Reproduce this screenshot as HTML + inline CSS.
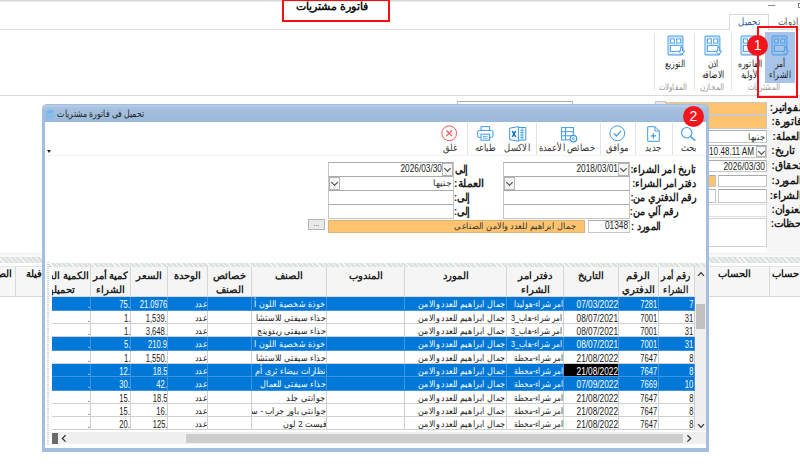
<!DOCTYPE html>
<html lang="ar">
<head>
<meta charset="utf-8">
<title>فاتورة مشتريات</title>
<style>
*{box-sizing:border-box;margin:0;padding:0}
html,body{width:800px;height:465px;overflow:hidden;background:#fff}
body{font-family:"Liberation Sans",sans-serif;font-size:10px;color:#1a1a1a;position:relative}
.abs,.abs *{position:absolute}
div{position:absolute}
span{position:static}
.t{white-space:nowrap;direction:rtl}
.b{font-weight:bold}
.fld{background:#fff;border:1px solid #c6c6c6;border-top-color:#a9abb1}
.or{background:#fdc36f;border:1px solid #c9c9c9}
.hatch{background:repeating-linear-gradient(45deg,#dce2de 0 2.8px,#f8f9f8 2.8px 3.7px)}
/* grid */
.hc{top:267px;height:30.2px;background:#f5f5f5;border-right:1px solid #d6d6d6;border-bottom:1px solid #d6d6d6;text-align:center;font-weight:bold;font-size:9.5px;line-height:14px;padding-top:2px;direction:rtl;white-space:nowrap;overflow:hidden;color:#222}
.row{left:52px;width:642.5px;background:#fff;border-bottom:1px solid #d0d0d0;overflow:hidden}
.row.sel{background:#0078d7;color:#fff;border-bottom-color:#3f93dc}
.c{top:0;height:100%;border-right:1px solid #d0d0d0;overflow:hidden;white-space:nowrap;direction:rtl;text-align:right;line-height:15.8px;font-size:9px}
.row.sel .c{border-right-color:#3f93dc}
.c.n{direction:ltr;text-align:right;font-size:10px;padding-right:0}
.c.n span{display:inline-block;transform:scaleX(.76);transform-origin:right center}
.c.n.d span{transform:scaleX(.83)}
.c.a.f span{transform:scaleX(.8)}
.c.a{padding-right:0}
.c.a span{display:inline-block;transform:scaleX(.88);transform-origin:right center}
.c.blk{background:#000;color:#fff}
.lbl{font-weight:bold;font-size:10.5px;white-space:nowrap;direction:rtl;text-align:right;line-height:14px;transform:scaleX(.87);transform-origin:right center}
.num{direction:ltr;white-space:nowrap;font-size:10px;line-height:12px;color:#222;transform:scaleX(.83);transform-origin:right center}
.tb{font-size:9.5px;white-space:nowrap;direction:rtl;text-align:center;color:#333;line-height:12px;transform:scaleX(.84)}
.sep{width:1px;background:#e3e3e3}
.rb{font-size:9.5px;text-align:center;direction:rtl;line-height:11.3px;color:#262626;white-space:nowrap;transform:scaleX(.76)}
.gl{font-size:8.5px;text-align:center;direction:rtl;color:#9a9a9a;white-space:nowrap;line-height:10px;transform:scaleX(.8)}
.circ{border-radius:50%;background:#f3151c;color:#fff;text-align:center;font-size:14px;line-height:21px;width:21px;height:21px}
.lbl.rl{transform:scaleX(.95)}
.dd{background:#f6f6f6;border:1px solid #b5b5b5}
.dd::after{content:"";position:absolute;left:2.2px;top:2.2px;width:4px;height:4px;border-right:1px solid #444;border-bottom:1px solid #444;transform:rotate(45deg)}
</style>
</head>
<body>

<!-- ===== top window edge ===== -->
<div style="left:0;top:0;width:800px;height:2px;background:linear-gradient(#cfcfcf,#f4f4f4)"></div>

<!-- title -->
<div class="t b" style="left:278.5px;top:-3px;width:107px;height:20px;text-align:center;font-size:10.9px;line-height:19px;color:#111">فاتورة مشتريات</div>
<div style="left:281.6px;top:-1px;width:108.8px;height:22.5px;border:2.2px solid #f80d12"></div>

<!-- minimize glyph -->
<div style="left:768px;top:5px;width:7px;height:1px;background:#8a8a8a"></div>
<div style="left:798px;top:3.4px;width:5px;height:5px;border:1px solid #808080"></div>

<!-- tabs -->
<div class="t" style="left:773px;top:15.5px;width:30px;font-size:9.5px;color:#555;line-height:12px;text-align:center;transform:scaleX(.85)">ادوات</div>
<div style="left:0;top:29px;width:800px;height:1px;background:#dcdcdc"></div>
<div style="left:729px;top:14px;width:40px;height:16px;background:#fff;border:1px solid #d9d9d9;border-bottom:none"></div>
<div class="t" style="left:729px;top:15.5px;width:40px;font-size:9.5px;color:#2b579a;line-height:12px;text-align:center;transform:scaleX(.85)">تحميل</div>

<!-- ribbon -->
<div style="left:765px;top:32px;width:30px;height:51px;background:#a8c4e8"></div>
<svg style="position:absolute;left:771.4px;top:34.5px;--bg:#a8c4e8;--in:#9cc0ec" width="19" height="21" viewBox="0 0 19 21">
<rect x="1.1" y="1.2" width="14.7" height="18.6" rx="1" style="fill:var(--bg,#fff)" stroke="#4a9fea" stroke-width="1.2"/>
<rect x="2.3" y="2.4" width="12.3" height="16.2" fill="none" style="stroke:var(--in,#d3e7fb)" stroke-width="1.2"/>
<rect x="3.4" y="3.9" width="4" height="4.2" style="fill:var(--bg,#fff)" stroke="#4a9fea" stroke-width="1"/>
<rect x="9.7" y="3.9" width="4" height="4.2" style="fill:var(--bg,#fff)" stroke="#4a9fea" stroke-width="1"/>
<rect x="3.4" y="10.4" width="10.6" height="6" style="fill:var(--bg,#fff)" stroke="#4a9fea" stroke-width="1"/>
<path d="M7.4 8.1v2.3M9.7 8.1v2.3" stroke="#8fc3f2" stroke-width="1"/>
<path d="M13.7 12.6h1.9v3.4h2.2l-3.15 3.4-3.15-3.4h2.2z" style="fill:var(--bg,#fff)" stroke="#4a9fea" stroke-width="1" stroke-linejoin="round"/>
</svg>
<svg style="position:absolute;left:739.9px;top:34.5px" width="19" height="21" viewBox="0 0 19 21">
<rect x="1.1" y="1.2" width="14.7" height="18.6" rx="1" style="fill:var(--bg,#fff)" stroke="#4a9fea" stroke-width="1.2"/>
<rect x="2.3" y="2.4" width="12.3" height="16.2" fill="none" style="stroke:var(--in,#d3e7fb)" stroke-width="1.2"/>
<rect x="3.4" y="3.9" width="4" height="4.2" style="fill:var(--bg,#fff)" stroke="#4a9fea" stroke-width="1"/>
<rect x="9.7" y="3.9" width="4" height="4.2" style="fill:var(--bg,#fff)" stroke="#4a9fea" stroke-width="1"/>
<rect x="3.4" y="10.4" width="10.6" height="6" style="fill:var(--bg,#fff)" stroke="#4a9fea" stroke-width="1"/>
<path d="M7.4 8.1v2.3M9.7 8.1v2.3" stroke="#8fc3f2" stroke-width="1"/>
<path d="M13.7 12.6h1.9v3.4h2.2l-3.15 3.4-3.15-3.4h2.2z" style="fill:var(--bg,#fff)" stroke="#4a9fea" stroke-width="1" stroke-linejoin="round"/>
</svg>
<svg style="position:absolute;left:704.3px;top:34.5px" width="19" height="21" viewBox="0 0 19 21">
<rect x="1.1" y="1.2" width="14.7" height="18.6" rx="1" style="fill:var(--bg,#fff)" stroke="#4a9fea" stroke-width="1.2"/>
<rect x="2.3" y="2.4" width="12.3" height="16.2" fill="none" style="stroke:var(--in,#d3e7fb)" stroke-width="1.2"/>
<rect x="3.4" y="3.9" width="4" height="4.2" style="fill:var(--bg,#fff)" stroke="#4a9fea" stroke-width="1"/>
<rect x="9.7" y="3.9" width="4" height="4.2" style="fill:var(--bg,#fff)" stroke="#4a9fea" stroke-width="1"/>
<rect x="3.4" y="10.4" width="10.6" height="6" style="fill:var(--bg,#fff)" stroke="#4a9fea" stroke-width="1"/>
<path d="M7.4 8.1v2.3M9.7 8.1v2.3" stroke="#8fc3f2" stroke-width="1"/>
<path d="M13.7 12.6h1.9v3.4h2.2l-3.15 3.4-3.15-3.4h2.2z" style="fill:var(--bg,#fff)" stroke="#4a9fea" stroke-width="1" stroke-linejoin="round"/>
</svg>
<svg style="position:absolute;left:666.5px;top:34.5px" width="19" height="21" viewBox="0 0 19 21">
<rect x="1.1" y="1.2" width="14.7" height="18.6" rx="1" style="fill:var(--bg,#fff)" stroke="#4a9fea" stroke-width="1.2"/>
<rect x="2.3" y="2.4" width="12.3" height="16.2" fill="none" style="stroke:var(--in,#d3e7fb)" stroke-width="1.2"/>
<rect x="3.4" y="3.9" width="4" height="4.2" style="fill:var(--bg,#fff)" stroke="#4a9fea" stroke-width="1"/>
<rect x="9.7" y="3.9" width="4" height="4.2" style="fill:var(--bg,#fff)" stroke="#4a9fea" stroke-width="1"/>
<rect x="3.4" y="10.4" width="10.6" height="6" style="fill:var(--bg,#fff)" stroke="#4a9fea" stroke-width="1"/>
<path d="M7.4 8.1v2.3M9.7 8.1v2.3" stroke="#8fc3f2" stroke-width="1"/>
<path d="M13.7 12.6h1.9v3.4h2.2l-3.15 3.4-3.15-3.4h2.2z" style="fill:var(--bg,#fff)" stroke="#4a9fea" stroke-width="1" stroke-linejoin="round"/>
</svg>
<div class="rb" style="left:750.0px;top:58px;width:60px">أمر<br>الشراء</div>
<div class="rb" style="left:720.0px;top:58px;width:60px">الفاتوره<br>الأولية</div>
<div class="rb" style="left:682.5px;top:58px;width:60px">اذن<br>الاضافه</div>
<div class="rb" style="left:645.0px;top:58px;width:60px">التوزيع</div>
<div class="sep" style="left:731px;top:33px;height:57px"></div>
<div class="sep" style="left:694px;top:33px;height:57px"></div>
<div class="sep" style="left:654px;top:33px;height:57px"></div>
<div class="gl" style="left:734px;top:82px;width:60px">المشتريات</div>
<div class="gl" style="left:682px;top:82px;width:60px">المخازن</div>
<div class="gl" style="left:642.5px;top:82px;width:60px">المقاولات</div>
<div style="left:0;top:95px;width:800px;height:1px;background:#dadada"></div>

<!-- ===== background form (right) ===== -->
<div style="left:0;top:96px;width:800px;height:158px;background:#fff"></div>
<div style="left:767px;top:96px;width:33px;height:156px;background:#f6f6f6"></div>
<div class="lbl rl" style="right:-1px;top:100.1px">لفواتير:</div>
<div class="lbl rl" style="right:-1px;top:114.3px">فاتورة:</div>
<div class="lbl rl" style="right:-1px;top:128.8px">العملة:</div>
<div class="lbl rl" style="right:6px;top:143.2px">تاريخ:</div>
<div class="lbl rl" style="right:-1px;top:158.3px">تحقاق:</div>
<div class="lbl rl" style="right:-1px;top:173.0px">المورد:</div>
<div class="lbl rl" style="right:-1px;top:187.5px">الشراء:</div>
<div class="lbl rl" style="right:-1px;top:201.6px">لعنوان:</div>
<div class="lbl rl" style="right:-1px;top:215.5px">حظات:</div>

<!-- bits behind dialog top -->
<div class="fld" style="left:457px;top:101px;width:116px;height:12px"></div>
<div style="left:654.5px;top:101px;width:11px;height:10px;background:#e9e9e9;border:1px solid #c4c4c4"></div>
<div class="or" style="left:665px;top:101.5px;width:102px;height:13px"></div>
<div class="or" style="left:665px;top:114.5px;width:102px;height:14.5px"></div>
<div class="fld" style="left:700px;top:130px;width:67px;height:12.5px"></div>
<div class="t" style="left:735px;top:131px;width:30px;text-align:right;font-size:9px;line-height:12px;color:#333;transform:scaleX(.9);transform-origin:right center">جنيها</div>
<div class="fld" style="left:700px;top:144.5px;width:67px;height:13.5px"></div>
<div class="dd" style="left:755.5px;top:145.5px;width:10px;height:11.5px"></div>
<div class="num" style="left:690px;top:145.5px;width:64px;text-align:right;transform:scaleX(.81)">6 10.48.11 AM</div>
<div class="fld" style="left:700px;top:159.5px;width:67px;height:12.5px"></div>
<div class="num" style="left:708px;top:160.5px;width:57px;text-align:right">2026/03/30</div>
<div class="fld" style="left:700px;top:174.5px;width:15.5px;height:12.5px"></div>
<div style="left:707px;top:175.5px;width:7.5px;height:10.5px;background:#fdc36f"></div>
<div class="fld" style="left:717.5px;top:174.5px;width:49.5px;height:12.5px"></div>
<div class="fld" style="left:700px;top:189px;width:15.5px;height:14px"></div>
<div class="fld" style="left:717.5px;top:189px;width:49.5px;height:14px"></div>
<div class="fld" style="left:700px;top:204px;width:67px;height:13px;border-color:#dedede"></div>
<div class="fld" style="left:700px;top:218px;width:67px;height:29px;border-color:#d0d0d0"></div>

<!-- red box 1 -->
<div style="left:757.2px;top:26px;width:41px;height:72.3px;border:2px solid #f80d12"></div>
<div class="circ" style="left:747.25px;top:34.8px">1</div>

<!-- ===== background grid ===== -->
<div style="left:0;top:253px;width:800px;height:4px;background:#f8f8f8;border-top:1px solid #efefef"></div>
<div class="hatch" style="left:0;top:256.5px;width:800px;height:6.3px"></div>
<div style="left:0;top:266px;width:800px;height:30.5px;background:#f7f7f7;border-top:1px solid #e4e4e4;border-bottom:1px solid #d9d9d9"></div>
<div class="sep" style="left:15px;top:266px;height:30px;background:#d9d9d9"></div>
<div class="sep" style="left:769px;top:266px;height:30px;background:#d9d9d9"></div>
<div class="t b" style="left:16px;top:267px;width:26px;font-size:9.5px;line-height:14px;text-align:right">فيلة</div>
<div class="t b" style="left:0;top:267px;width:12px;font-size:9.5px;line-height:14px;text-align:right">الص</div>
<div class="t b" style="left:712px;top:267px;width:44px;font-size:9.5px;line-height:14px;text-align:center">الحساب</div>
<div class="t b" style="left:772px;top:267px;width:32px;font-size:9.5px;line-height:14px;text-align:left">حساب</div>

<!-- ===== dialog ===== -->
<div id="dlg" style="left:42px;top:104px;width:667px;height:348px;background:#a3bfdf;border-radius:5px 5px 0 0"></div>
<div style="left:43px;top:105px;width:665px;height:17px;border-radius:4px 4px 0 0;background:linear-gradient(#b9cfe9 0,#a6c1e0 18%,#9cb9da 100%)"></div>
<div style="left:45px;top:121.5px;width:661px;height:326.5px;background:#fff"></div>
<!-- title icon + text -->
<svg style="position:absolute;left:45px;top:109px" width="10" height="11" viewBox="0 0 11 12"><path d="M5.5 0.5 10.5 3 5.5 5.5 0.5 3Z" fill="#6fb3f2"/><path d="M0.5 5.5 5.5 8 10.5 5.5M0.5 8 5.5 10.5 10.5 8" stroke="#79b9f3" stroke-width="1.3" fill="none"/></svg>
<div class="t" style="left:24px;top:107px;width:120px;font-size:9.5px;line-height:14px;text-align:right;color:#1e1e1e;transform:scaleX(.78);transform-origin:right center">تحميل فى فاتورة مشتريات</div>
<div class="circ" style="left:683px;top:105.7px">2</div>

<!-- toolbar -->
<div style="left:46px;top:155px;width:660px;height:1px;background:#f1f1f1"></div>
<div style="left:47px;top:150px;width:0;height:0;border-left:2.5px solid transparent;border-right:2.5px solid transparent;border-top:3px solid #222"></div>
<div class="sep" style="left:671.5px;top:123px;height:32px"></div>
<div class="sep" style="left:635px;top:123px;height:32px"></div>
<div class="sep" style="left:599.5px;top:123px;height:32px"></div>
<div class="sep" style="left:535.5px;top:123px;height:32px"></div>
<div class="sep" style="left:467px;top:123px;height:32px"></div>
<svg style="position:absolute;left:680px;top:125.5px" width="17" height="16" viewBox="0 0 17 16" fill="none" stroke="#3f9ae6" stroke-width="1.1"><circle cx="6.75" cy="6.75" r="5.2"/><path d="M10.5 10.5 15.2 14.6" stroke-width="1.5"/></svg>
<svg style="position:absolute;left:646.5px;top:125.5px" width="13" height="16" viewBox="0 0 13 16" fill="none" stroke="#3f9ae6" stroke-width="1"><path d="M0.7 0.7h7.3l4.3 4.3v10.3h-11.6z"/><path d="M8 0.7v4.3h4.3"/><path d="M6.4 7.2v5.4M3.7 9.9h5.4" stroke-width="1.2"/></svg>
<svg style="position:absolute;left:608.5px;top:125px" width="17" height="17" viewBox="0 0 17 17" fill="none" stroke="#3f9ae6" stroke-width="1"><circle cx="8.3" cy="8.3" r="7.4"/><path d="M4.8 8.4 7.4 11 12 5.8" stroke-width="1.2"/></svg>
<svg style="position:absolute;left:560.5px;top:126.5px" width="17" height="16" viewBox="0 0 17 16" fill="none" stroke="#3f9ae6" stroke-width="1"><rect x="0.6" y="0.6" width="11.8" height="12.3"/><path d="M0.6 4.7h11.8M0.6 8.8h11.8M4.6 0.6v12.3"/><circle cx="12.4" cy="11.6" r="3.3" fill="#fff" stroke-width="1.2"/><circle cx="12.4" cy="11.6" r="1" /></svg>
<svg style="position:absolute;left:508.5px;top:125.5px" width="18" height="16" viewBox="0 0 18 16" fill="none" stroke="#3f9ae6" stroke-width="1"><path d="M9 1.5h7.8v12.6H9"/><path d="M11 4.2h4M11 6.6h4M11 9h4M11 11.4h4M13 1.5v12.6" stroke-width=".8"/><path d="M0.6 2.2 9.4 0.6v14.6L0.6 13.6z" fill="#fff"/><path d="M3.2 5 6.8 10.8M6.8 5 3.2 10.8" stroke="#1c75c9" stroke-width="1.5"/></svg>
<svg style="position:absolute;left:476.5px;top:126px" width="17" height="15" viewBox="0 0 17 15" fill="none" stroke="#3f9ae6" stroke-width="1"><path d="M4 4.4V0.6h8.6v3.8"/><rect x="0.6" y="4.4" width="15.4" height="7" rx="1.6"/><rect x="4" y="8.2" width="8.6" height="6" fill="#fff"/><path d="M6 10.4h4.6M6 12.2h4.6" stroke-width=".8"/></svg>
<svg style="position:absolute;left:441px;top:125px" width="17" height="17" viewBox="0 0 17 17" fill="none" stroke="#f1575b" stroke-width="1"><circle cx="8.2" cy="8.3" r="7.4"/><path d="M5.4 5.5 11 11.1M11 5.5 5.4 11.1" stroke-width="1.2"/></svg>
<div class="tb" style="left:653.6px;top:142px;width:70px">بحث</div>
<div class="tb" style="left:618.0px;top:142px;width:70px">جديد</div>
<div class="tb" style="left:581.7px;top:142px;width:70px">موافق</div>
<div class="tb" style="left:532.0px;top:142px;width:70px">خصائص الأعمدة</div>
<div class="tb" style="left:482.0px;top:142px;width:70px">الاكسل</div>
<div class="tb" style="left:450.0px;top:142px;width:70px">طباعه</div>
<div class="tb" style="left:414.5px;top:142px;width:70px">غلق</div>

<!-- form right block -->
<div class="lbl" style="left:586px;width:110px;top:161.5px">تاريخ امر الشراء:</div>
<div class="lbl" style="left:586px;width:110px;top:175.5px">دفتر امر الشراء:</div>
<div class="lbl" style="left:586px;width:110px;top:189.5px">رقم الدفتري من:</div>
<div class="lbl" style="left:568px;width:110px;top:203.5px">رقم آلي من:</div>
<div class="lbl" style="left:551px;width:110px;top:219px">المورد :</div>
<div class="fld" style="left:503px;top:162px;width:127px;height:14.5px"></div>
<div class="fld" style="left:503px;top:176px;width:127px;height:14.5px"></div>
<div class="fld" style="left:503px;top:190px;width:127px;height:14.5px"></div>
<div class="fld" style="left:503px;top:204px;width:127px;height:14.5px"></div>
<div class="dd" style="left:618px;top:163px;width:11px;height:12.5px"></div>
<div class="dd" style="left:504px;top:177px;width:11px;height:12.5px"></div>
<div class="num" style="left:560px;top:163px;width:58px;text-align:right">2018/03/01</div>
<div class="fld" style="left:588px;top:219.5px;width:42px;height:13px"></div>
<div class="num" style="left:590px;top:220px;width:38px;text-align:right">01348</div>
<div class="or" style="left:328px;top:219.5px;width:257px;height:13px;border-color:#d8b27a"></div>
<div class="t" style="left:400px;top:220px;width:176px;text-align:right;font-size:9px;line-height:12px;color:#333;transform:scaleX(.9);transform-origin:right center">جمال ابراهيم للعدد والامن الصناعى</div>
<div style="left:308px;top:219px;width:17px;height:11px;background:#e9e9e9;border:1px solid #b4b4b4;font-size:7px;line-height:7px;text-align:center;color:#444">...</div>

<!-- form left block -->
<div class="lbl" style="left:358px;width:110px;top:161.5px">إلى</div>
<div class="lbl" style="left:374px;width:110px;top:175.5px;transform:scaleX(.98)">العملة:</div>
<div class="lbl" style="left:359.5px;width:110px;top:189.5px">إلى:</div>
<div class="lbl" style="left:359.5px;width:110px;top:203.5px">إلى:</div>
<div class="fld" style="left:328px;top:162px;width:126px;height:14.5px"></div>
<div class="fld" style="left:328px;top:176px;width:126px;height:14.5px"></div>
<div class="fld" style="left:328px;top:190px;width:126px;height:14.5px"></div>
<div class="fld" style="left:328px;top:204px;width:126px;height:14.5px"></div>
<div class="dd" style="left:442px;top:163px;width:11px;height:12.5px"></div>
<div class="dd" style="left:329px;top:177px;width:11px;height:12.5px"></div>
<div class="num" style="left:384px;top:163px;width:58px;text-align:right">2026/03/30</div>
<div class="t" style="left:420px;top:177px;width:32px;text-align:right;font-size:9px;line-height:12px;color:#333">جنيها</div>

<!-- dialog grid -->
<div style="left:47px;top:262px;width:2px;height:184px;background:repeating-linear-gradient(#cfcfcf 0 1px,#fff 1px 2px)"></div>
<div class="hatch" style="left:49px;top:262.5px;width:657px;height:4px"></div>
<div style="left:52px;top:267px;width:654px;height:30.2px;background:#f5f5f5"></div>
<div class="hc" style="left:52px;width:39px"><div style="right:-1px;top:2px;width:62px;text-align:center">الكمية السابق<br>تحميلها</div></div>
<div class="hc" style="left:91px;width:40px">كمية أمر<br>الشراء</div>
<div class="hc" style="left:131px;width:37px">السعر</div>
<div class="hc" style="left:168px;width:40px">الوحدة</div>
<div class="hc" style="left:208px;width:44px">خصائص<br>الصنف</div>
<div class="hc" style="left:252px;width:75px">الصنف</div>
<div class="hc" style="left:327px;width:78px">المندوب</div>
<div class="hc" style="left:405px;width:102px">المورد</div>
<div class="hc" style="left:507px;width:57px">دفتر امر<br>الشراء</div>
<div class="hc" style="left:564px;width:55px">التاريخ</div>
<div class="hc" style="left:619px;width:39.5px">الرقم<br>الدفتري</div>
<div class="hc" style="left:658.5px;width:36.0px"><span style="display:inline-block;transform:scaleX(.86)">رقم أمر<br>الشراء</span></div>
<div class="row sel" style="top:297.2px;height:13.33px">
<div class="c n" style="left:0px;width:39px"><span>.</span></div>
<div class="c n" style="left:39px;width:40px"><span>75.</span></div>
<div class="c n" style="left:79px;width:37px"><span>21.0976</span></div>
<div class="c a" style="left:116px;width:40px"><span>عدد</span></div>
<div class="c a" style="left:156px;width:44px"><span></span></div>
<div class="c a" style="left:200px;width:75px"><span>خوذة شخصية اللون أ</span></div>
<div class="c a" style="left:275px;width:78px"><span></span></div>
<div class="c a" style="left:353px;width:102px"><span>جمال ابراهيم للعدد والامن</span></div>
<div class="c a f" style="left:455px;width:57px"><span>امر شراء-هوليدا</span></div>
<div class="c n d" style="left:512px;width:55px"><span>07/03/2022</span></div>
<div class="c n" style="left:567px;width:39.5px"><span>7281</span></div>
<div class="c n" style="left:606.5px;width:36.0px"><span>7</span></div>
</div>
<div class="row" style="top:310.53px;height:13.33px">
<div class="c n" style="left:0px;width:39px"><span>.</span></div>
<div class="c n" style="left:39px;width:40px"><span>1.</span></div>
<div class="c n" style="left:79px;width:37px"><span>1,539.</span></div>
<div class="c a" style="left:116px;width:40px"><span>عدد</span></div>
<div class="c a" style="left:156px;width:44px"><span></span></div>
<div class="c a" style="left:200px;width:75px"><span>حذاء سيفتى للاستشا</span></div>
<div class="c a" style="left:275px;width:78px"><span></span></div>
<div class="c a" style="left:353px;width:102px"><span>جمال ابراهيم للعدد والامن</span></div>
<div class="c a f" style="left:455px;width:57px"><span>امر شراء-هاب_3</span></div>
<div class="c n d" style="left:512px;width:55px"><span>08/07/2021</span></div>
<div class="c n" style="left:567px;width:39.5px"><span>7001</span></div>
<div class="c n" style="left:606.5px;width:36.0px"><span>31</span></div>
</div>
<div class="row" style="top:323.86px;height:13.33px">
<div class="c n" style="left:0px;width:39px"><span>.</span></div>
<div class="c n" style="left:39px;width:40px"><span>1.</span></div>
<div class="c n" style="left:79px;width:37px"><span>3,648.</span></div>
<div class="c a" style="left:116px;width:40px"><span>عدد</span></div>
<div class="c a" style="left:156px;width:44px"><span></span></div>
<div class="c a" style="left:200px;width:75px"><span>حذاء سيفتى ريدوينج</span></div>
<div class="c a" style="left:275px;width:78px"><span></span></div>
<div class="c a" style="left:353px;width:102px"><span>جمال ابراهيم للعدد والامن</span></div>
<div class="c a f" style="left:455px;width:57px"><span>امر شراء-هاب_3</span></div>
<div class="c n d" style="left:512px;width:55px"><span>08/07/2021</span></div>
<div class="c n" style="left:567px;width:39.5px"><span>7001</span></div>
<div class="c n" style="left:606.5px;width:36.0px"><span>31</span></div>
</div>
<div class="row sel" style="top:337.19px;height:13.33px">
<div class="c n" style="left:0px;width:39px"><span>.</span></div>
<div class="c n" style="left:39px;width:40px"><span>5.</span></div>
<div class="c n" style="left:79px;width:37px"><span>210.9</span></div>
<div class="c a" style="left:116px;width:40px"><span>عدد</span></div>
<div class="c a" style="left:156px;width:44px"><span></span></div>
<div class="c a" style="left:200px;width:75px"><span>خوذة شخصية اللون ا</span></div>
<div class="c a" style="left:275px;width:78px"><span></span></div>
<div class="c a" style="left:353px;width:102px"><span>جمال ابراهيم للعدد والامن</span></div>
<div class="c a f" style="left:455px;width:57px"><span>امر شراء-هاب_3</span></div>
<div class="c n d" style="left:512px;width:55px"><span>08/07/2021</span></div>
<div class="c n" style="left:567px;width:39.5px"><span>7001</span></div>
<div class="c n" style="left:606.5px;width:36.0px"><span>31</span></div>
</div>
<div class="row" style="top:350.52px;height:13.33px">
<div class="c n" style="left:0px;width:39px"><span>.</span></div>
<div class="c n" style="left:39px;width:40px"><span>1.</span></div>
<div class="c n" style="left:79px;width:37px"><span>1,550.</span></div>
<div class="c a" style="left:116px;width:40px"><span>عدد</span></div>
<div class="c a" style="left:156px;width:44px"><span></span></div>
<div class="c a" style="left:200px;width:75px"><span>حذاء سيفتى للاستشا</span></div>
<div class="c a" style="left:275px;width:78px"><span></span></div>
<div class="c a" style="left:353px;width:102px"><span>جمال ابراهيم للعدد والامن</span></div>
<div class="c a f" style="left:455px;width:57px"><span>امر شراء-محطة</span></div>
<div class="c n d" style="left:512px;width:55px"><span>21/08/2022</span></div>
<div class="c n" style="left:567px;width:39.5px"><span>7647</span></div>
<div class="c n" style="left:606.5px;width:36.0px"><span>8</span></div>
</div>
<div class="row sel" style="top:363.85px;height:13.33px">
<div class="c n" style="left:0px;width:39px"><span>.</span></div>
<div class="c n" style="left:39px;width:40px"><span>12.</span></div>
<div class="c n" style="left:79px;width:37px"><span>18.5</span></div>
<div class="c a" style="left:116px;width:40px"><span>عدد</span></div>
<div class="c a" style="left:156px;width:44px"><span></span></div>
<div class="c a" style="left:200px;width:75px"><span>نظارات بيضاء ثرى أم</span></div>
<div class="c a" style="left:275px;width:78px"><span></span></div>
<div class="c a" style="left:353px;width:102px"><span>جمال ابراهيم للعدد والامن</span></div>
<div class="c a f" style="left:455px;width:57px"><span>امر شراء-محطة</span></div>
<div class="c n d blk" style="left:512px;width:55px"><span>21/08/2022</span></div>
<div class="c n" style="left:567px;width:39.5px"><span>7647</span></div>
<div class="c n" style="left:606.5px;width:36.0px"><span>8</span></div>
</div>
<div class="row sel" style="top:377.18px;height:13.33px">
<div class="c n" style="left:0px;width:39px"><span>.</span></div>
<div class="c n" style="left:39px;width:40px"><span>30.</span></div>
<div class="c n" style="left:79px;width:37px"><span>42.</span></div>
<div class="c a" style="left:116px;width:40px"><span>عدد</span></div>
<div class="c a" style="left:156px;width:44px"><span></span></div>
<div class="c a" style="left:200px;width:75px"><span>حذاء سيفتى للعمال</span></div>
<div class="c a" style="left:275px;width:78px"><span></span></div>
<div class="c a" style="left:353px;width:102px"><span>جمال ابراهيم للعدد والامن</span></div>
<div class="c a f" style="left:455px;width:57px"><span>امر شراء-محطة</span></div>
<div class="c n d" style="left:512px;width:55px"><span>07/09/2022</span></div>
<div class="c n" style="left:567px;width:39.5px"><span>7669</span></div>
<div class="c n" style="left:606.5px;width:36.0px"><span>10</span></div>
</div>
<div class="row" style="top:390.51px;height:13.33px">
<div class="c n" style="left:0px;width:39px"><span>.</span></div>
<div class="c n" style="left:39px;width:40px"><span>15.</span></div>
<div class="c n" style="left:79px;width:37px"><span>18.5</span></div>
<div class="c a" style="left:116px;width:40px"><span>عدد</span></div>
<div class="c a" style="left:156px;width:44px"><span></span></div>
<div class="c a" style="left:200px;width:75px"><span>جوانتى جلد</span></div>
<div class="c a" style="left:275px;width:78px"><span></span></div>
<div class="c a" style="left:353px;width:102px"><span>جمال ابراهيم للعدد والامن</span></div>
<div class="c a f" style="left:455px;width:57px"><span>امر شراء-محطة</span></div>
<div class="c n d" style="left:512px;width:55px"><span>21/08/2022</span></div>
<div class="c n" style="left:567px;width:39.5px"><span>7647</span></div>
<div class="c n" style="left:606.5px;width:36.0px"><span>8</span></div>
</div>
<div class="row" style="top:403.84px;height:13.33px">
<div class="c n" style="left:0px;width:39px"><span>.</span></div>
<div class="c n" style="left:39px;width:40px"><span>15.</span></div>
<div class="c n" style="left:79px;width:37px"><span>16.</span></div>
<div class="c a" style="left:116px;width:40px"><span>عدد</span></div>
<div class="c a" style="left:156px;width:44px"><span></span></div>
<div class="c a" style="left:200px;width:75px"><span>جوانتى باور جراب - سبر</span></div>
<div class="c a" style="left:275px;width:78px"><span></span></div>
<div class="c a" style="left:353px;width:102px"><span>جمال ابراهيم للعدد والامن</span></div>
<div class="c a f" style="left:455px;width:57px"><span>امر شراء-محطة</span></div>
<div class="c n d" style="left:512px;width:55px"><span>21/08/2022</span></div>
<div class="c n" style="left:567px;width:39.5px"><span>7647</span></div>
<div class="c n" style="left:606.5px;width:36.0px"><span>8</span></div>
</div>
<div class="row" style="top:417.17px;height:13.33px">
<div class="c n" style="left:0px;width:39px"><span>.</span></div>
<div class="c n" style="left:39px;width:40px"><span>20.</span></div>
<div class="c n" style="left:79px;width:37px"><span>125.</span></div>
<div class="c a" style="left:116px;width:40px"><span>عدد</span></div>
<div class="c a" style="left:156px;width:44px"><span></span></div>
<div class="c a" style="left:200px;width:75px"><span>فيست 2 لون</span></div>
<div class="c a" style="left:275px;width:78px"><span></span></div>
<div class="c a" style="left:353px;width:102px"><span>جمال ابراهيم للعدد والامن</span></div>
<div class="c a f" style="left:455px;width:57px"><span>امر شراء-محطة</span></div>
<div class="c n d" style="left:512px;width:55px"><span>21/08/2022</span></div>
<div class="c n" style="left:567px;width:39.5px"><span>7647</span></div>
<div class="c n" style="left:606.5px;width:36.0px"><span>8</span></div>
</div>
<!-- vertical scrollbar -->
<div style="left:694.5px;top:267px;width:11.5px;height:164px;background:#f0f0f0"></div>
<div style="left:696px;top:303.5px;width:9px;height:25.5px;background:#c1c1c1"></div>
<!-- horizontal scrollbar -->
<div style="left:52px;top:432px;width:654px;height:12px;background:#f0f0f0"></div>
<div style="left:52px;top:432.5px;width:6px;height:11px;background:#6a6a6a"></div>
<div style="left:186px;top:433.5px;width:497px;height:9.5px;background:#cdcdcd"></div>
<svg style="position:absolute;left:61px;top:433.5px" width="6" height="9" viewBox="0 0 6 9" fill="none" stroke="#333" stroke-width="1.3"><path d="M4.6 1.2 1.4 4.4 4.6 7.6"/></svg>
<svg style="position:absolute;left:686px;top:433.5px" width="6" height="9" viewBox="0 0 6 9" fill="none" stroke="#333" stroke-width="1.3"><path d="M1.4 1.2 4.6 4.4 1.4 7.6"/></svg>
<svg style="position:absolute;left:696.5px;top:271px" width="8" height="6" viewBox="0 0 8 6" fill="none" stroke="#333" stroke-width="1.2"><path d="M1 4.8 4 1.6 7 4.8"/></svg>
<svg style="position:absolute;left:696.5px;top:423px" width="8" height="6" viewBox="0 0 8 6" fill="none" stroke="#333" stroke-width="1.2"><path d="M1 1.2 4 4.4 7 1.2"/></svg>
</body>
</html>
